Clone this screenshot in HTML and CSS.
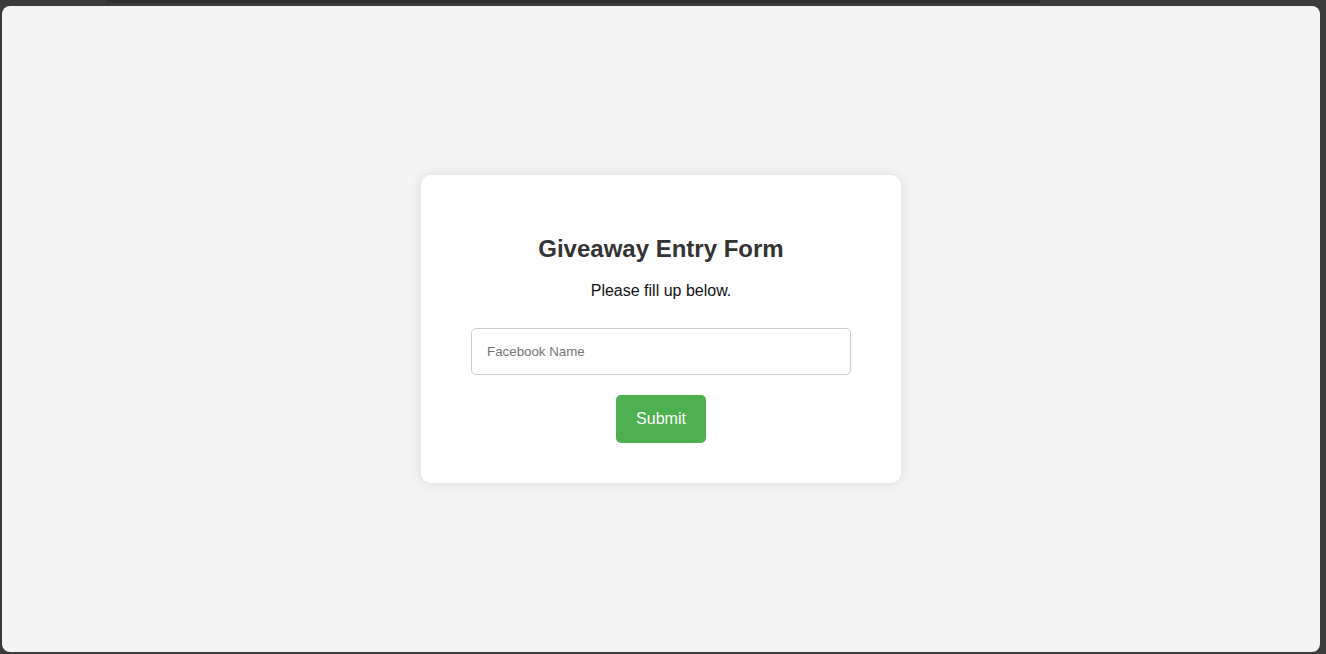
FILE: index.html
```html
<!DOCTYPE html>
<html lang="en">
<head>
<meta charset="utf-8">
<title>Giveaway Entry Form</title>
<link rel="stylesheet" href="styles.css">
</head>
<body>
<div class="frame">
  <div class="window">
    <form class="card">
      <h2 class="title">Giveaway Entry Form</h2>
      <p class="subtitle">Please fill up below.</p>
      <input class="field" type="text" placeholder="Facebook Name">
      <button class="submit" type="button">Submit</button>
    </form>
  </div>
</div>
</body>
</html>
```

FILE: styles.css
```css
* { box-sizing: border-box; }
html, body { margin: 0; padding: 0; }
body {
  background: #3a3a3a;
  font-family: "Liberation Sans", Arial, sans-serif;
  width: 1326px;
  height: 654px;
  overflow: hidden;
}
.frame {
  padding: 6px 6px 2px 2px;
  height: 654px;
  position: relative;
}
.frame::before {
  content: "";
  position: absolute;
  top: 0;
  left: 107px;
  width: 933px;
  height: 3px;
  background: #2f2f2f;
}
.window {
  height: 646px;
  background: #f4f4f4;
  border-radius: 8px;
  display: flex;
  align-items: center;
  justify-content: center;
}
.card {
  width: 480px;
  background: #ffffff;
  border-radius: 10px;
  box-shadow: 0 0 12px rgba(0, 0, 0, 0.1);
  padding: 40px 50px;
  display: flex;
  flex-direction: column;
  align-items: center;
  text-align: center;
}
.title {
  margin: 20px 0 19px;
  font-size: 24px;
  line-height: 28px;
  font-weight: bold;
  color: #333333;
}
.subtitle {
  margin: 0 0 28px;
  font-size: 16px;
  line-height: 18px;
  color: #111111;
}
.field {
  width: 100%;
  height: 47px;
  padding: 0 15px;
  border: 1px solid #cccccc;
  border-radius: 5px;
  font-family: "Liberation Sans", Arial, sans-serif;
  font-size: 13.33px;
  color: #333;
  margin: 0 0 20px;
  outline: none;
}
.field::placeholder { color: #757575; }
.submit {
  width: 90px;
  height: 48px;
  background: #4caf50;
  color: #ffffff;
  border: none;
  border-radius: 5px;
  font-family: "Liberation Sans", Arial, sans-serif;
  font-size: 16px;
  padding: 0;
  cursor: pointer;
}
```
